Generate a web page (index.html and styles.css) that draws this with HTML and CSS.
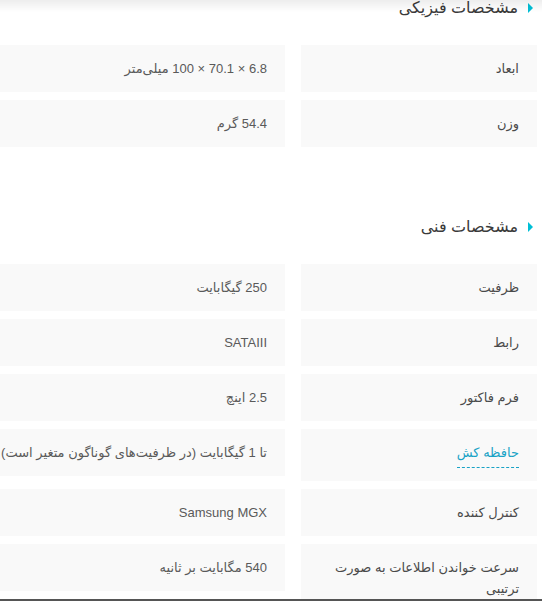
FILE: index.html
```html
<!DOCTYPE html>
<html lang="fa" dir="rtl">
<head>
  <meta charset="UTF-8" />
  <meta name="viewport" content="width=device-width, initial-scale=1.0"/>
  <title>مشخصات محصول</title>
  <link rel="stylesheet" href="styles.css">
</head>
<body>
  <div class="top-shade"></div>

  <div class="specs">
    <section class="spec-group">
      <h3 class="spec-title">مشخصات فیزیکی</h3>
      <ul class="spec-list">
        <li class="spec-row">
          <div class="spec-key">ابعاد</div>
          <div class="spec-value">6.8 × 70.1 × 100 میلی‌متر</div>
        </li>
        <li class="spec-row">
          <div class="spec-key">وزن</div>
          <div class="spec-value">54.4 گرم</div>
        </li>
      </ul>
    </section>

    <section class="spec-group">
      <h3 class="spec-title">مشخصات فنی</h3>
      <ul class="spec-list">
        <li class="spec-row">
          <div class="spec-key">ظرفیت</div>
          <div class="spec-value">250 گیگابایت</div>
        </li>
        <li class="spec-row">
          <div class="spec-key">رابط</div>
          <div class="spec-value">SATAIII</div>
        </li>
        <li class="spec-row">
          <div class="spec-key">فرم فاکتور</div>
          <div class="spec-value">2.5 اینچ</div>
        </li>
        <li class="spec-row">
          <div class="spec-key"><span class="spec-hint">حافظه کش</span></div>
          <div class="spec-value">تا 1 گیگابایت (در ظرفیت‌های گوناگون متغیر است)</div>
        </li>
        <li class="spec-row">
          <div class="spec-key">کنترل کننده</div>
          <div class="spec-value">Samsung MGX</div>
        </li>
        <li class="spec-row">
          <div class="spec-key">سرعت خواندن اطلاعات به صورت ترتیبی</div>
          <div class="spec-value">540 مگابایت بر ثانیه</div>
        </li>
      </ul>
    </section>
  </div>

  <div class="bottom-line"></div>
</body>
</html>
```

FILE: styles.css
```css
* {
  box-sizing: border-box;
  margin: 0;
  padding: 0;
}

body {
  font-family: 'Liberation Sans', 'DejaVu Sans', sans-serif;
  background: #fff;
  color: #555;
  overflow: hidden;
}

.top-shade {
  position: fixed;
  top: 0;
  left: 0;
  right: 0;
  height: 12px;
  background: linear-gradient(to bottom, rgba(0, 0, 0, 0.07), rgba(0, 0, 0, 0));
  z-index: 2;
}

.bottom-line {
  position: fixed;
  left: 0;
  right: 0;
  bottom: 0;
  height: 2px;
  background: #555;
  z-index: 2;
}

.specs {
  padding-right: 5px;
  margin-top: -4px;
}

.spec-group {
  margin-bottom: 68px;
}

.spec-title {
  display: flex;
  align-items: center;
  gap: 10px;
  font-size: 16px;
  font-weight: 400;
  line-height: 24px;
  color: #3a3a3a;
  margin-bottom: 25px;
  padding-right: 4px;
}

.spec-title::before {
  content: "";
  width: 0;
  height: 0;
  border-top: 5px solid transparent;
  border-bottom: 5px solid transparent;
  border-left: 5px solid #00bfd6;
}

.spec-list {
  list-style: none;
  display: flex;
  flex-direction: column;
  gap: 8px;
}

.spec-row {
  display: flex;
  align-items: flex-start;
  gap: 16px;
}

.spec-key,
.spec-value {
  background: #f9f9f9;
  padding: 13px 18px;
  font-size: 13px;
  line-height: 21px;
}

.spec-key {
  flex: 0 0 236px;
  color: #4a4a4a;
}

.spec-value {
  flex: 1;
  color: #5a5a5a;
  white-space: nowrap;
}

.spec-hint {
  display: inline-block;
  padding-bottom: 4px;
  border-bottom: 1px dashed #19a3c6;
  color: #19a3c6;
}
```
